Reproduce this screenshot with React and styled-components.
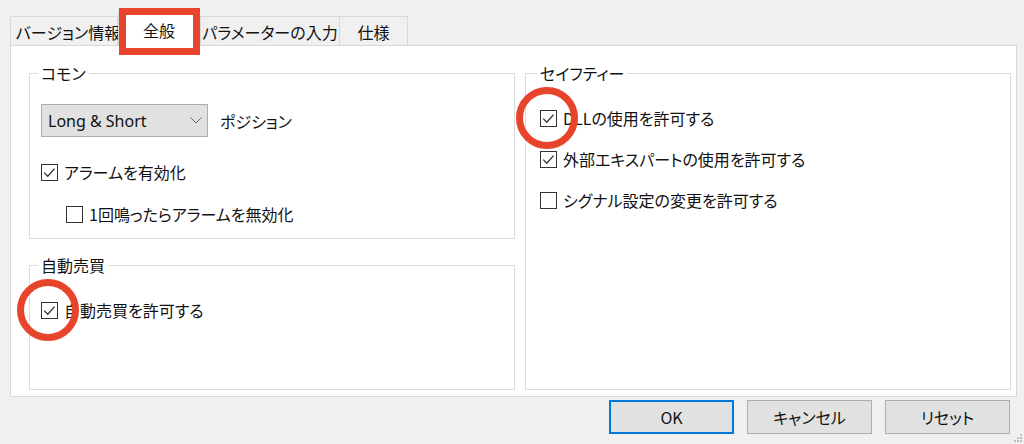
import React from "react";
import styled, { createGlobalStyle } from "styled-components";

const Global = createGlobalStyle`
  html, body { margin: 0; padding: 0; background: #f0f0f0; }
  body {
    font-family: "Noto Sans CJK JP", "Noto Sans", sans-serif;
    font-size: 16px;
    color: #111;
    font-feature-settings: "palt";
  }
  * { box-sizing: border-box; }
`;

const Window = styled.div`
  position: relative;
  width: 1024px;
  height: 444px;
  background: #f0f0f0;
  padding-top: 10px;
  display: flex;
  flex-direction: column;
  overflow: hidden;
`;

const TabBar = styled.div`
  position: relative;
  z-index: 2;
  display: flex;
  align-items: flex-end;
  height: 36px;
  margin: 0 0 -1px 10px;
`;

const Tab = styled.div`
  position: relative;
  width: ${(p) => p.$w}px;
  height: ${(p) => (p.$active ? 36 : 29)}px;
  margin-bottom: ${(p) => (p.$active ? 0 : 1)}px;
  background: ${(p) => (p.$active ? "#fff" : "#f0f0f0")};
  border: 1px solid #d9d9d9;
  border-bottom: none;
  margin-left: ${(p) => (p.$overlap ? -1 : 0)}px;
  display: flex;
  align-items: center;
  justify-content: center;
  padding-top: ${(p) => (p.$active ? 2 : 2)}px;
  padding-left: ${(p) => p.$pl || 0}px;
  font-size: 16px;
  line-height: 22px;
  white-space: nowrap;
`;

const RedBox = styled.div`
  position: absolute;
  left: 0;
  right: -1px;
  top: -3px;
  height: 47px;
  border: 7px solid #e8442b;
  pointer-events: none;
`;

const Panel = styled.div`
  position: relative;
  z-index: 1;
  margin: 0 7px 0 10px;
  height: 352px;
  background: #fff;
  border: 1px solid #d9d9d9;
  padding: 16px 5px 6px 18px;
  display: grid;
  grid-template-columns: 486px 486px;
  column-gap: 10px;
`;

const Column = styled.div`
  display: flex;
  flex-direction: column;
  gap: 15px;
`;

const Group = styled.fieldset`
  margin: 0;
  min-width: 0;
  border: 1px solid #dcdcdc;
  padding: 0 10px 0 ${(p) => p.$inset}px;
  height: ${(p) => (p.$h ? `${p.$h}px` : "auto")};
  flex: ${(p) => (p.$grow ? 1 : "none")};
  display: flex;
  flex-direction: column;
  align-items: flex-start;
`;

const Legend = styled.legend`
  padding: 0 3px;
  margin-left: -3px;
  line-height: 22px;
  font-size: 16px;
`;

const Row = styled.div`
  display: flex;
  align-items: center;
  margin-top: ${(p) => p.$mt || 0}px;
  margin-left: ${(p) => p.$ml || 0}px;
`;

const Select = styled.div`
  width: 167px;
  height: 33px;
  background: #e1e1e1;
  border: 1px solid #adadad;
  display: flex;
  align-items: center;
  justify-content: space-between;
  padding: 0 5px 0 6px;
  font-family: "Noto Sans", "Noto Sans CJK JP", sans-serif;
  font-size: 16px;
`;

const SelectLabel = styled.span`
  margin-left: 12px;
  line-height: 22px;
`;

const CheckRow = styled.label`
  position: relative;
  display: flex;
  align-items: center;
  gap: 6px;
  height: 22px;
  line-height: 22px;
  margin-top: ${(p) => p.$mt || 0}px;
  margin-left: ${(p) => p.$ml || 0}px;
  white-space: nowrap;
`;

const BoxSvg = styled.svg`
  flex: none;
  display: block;
`;

const Ring = styled.span`
  position: absolute;
  left: -24px;
  top: -20px;
  width: 62px;
  height: 62px;
  border: 7px solid #e8442b;
  border-radius: 50%;
  pointer-events: none;
`;

const ButtonRow = styled.div`
  display: flex;
  justify-content: flex-end;
  gap: 13px;
  margin-top: 3px;
  padding-right: 14px;
`;

const Button = styled.div`
  width: 125px;
  height: 34px;
  background: #e1e1e1;
  border: ${(p) => (p.$primary ? "2px solid #0078d7" : "1px solid #adadad")};
  display: flex;
  align-items: center;
  justify-content: center;
  font-size: 16px;
`;

const Grip = styled.svg`
  position: absolute;
  right: 1px;
  bottom: 1px;
`;

function CheckBox({ checked }) {
  return (
    <BoxSvg width="17" height="17" viewBox="0 0 17 17">
      <rect x="0.5" y="0.5" width="16" height="16" fill="#fff" stroke="#333" />
      {checked && (
        <polyline
          points="3.2,8.6 6.8,12.2 13.6,4.6"
          fill="none"
          stroke="#333"
          strokeWidth="1.3"
        />
      )}
    </BoxSvg>
  );
}

function Check({ checked, children, ring, mt, ml }) {
  return (
    <CheckRow $mt={mt} $ml={ml}>
      <CheckBox checked={checked} />
      <span>{children}</span>
      {ring && <Ring />}
    </CheckRow>
  );
}

const tabs = [
  { label: "バージョン情報", w: 108, pl: 8 },
  { label: "全般", w: 82, active: true },
  { label: "パラメーターの入力", w: 140 },
  { label: "仕様", w: 69, overlap: true },
];

export default function App() {
  return (
    <>
      <Global />
      <Window>
        <TabBar>
          {tabs.map((t) => (
            <Tab key={t.label} $w={t.w} $pl={t.pl} $active={t.active} $overlap={t.overlap}>
              {t.label}
              {t.active && <RedBox />}
            </Tab>
          ))}
        </TabBar>
        <Panel>
          <Column>
            <Group $inset={11} $h={177}>
              <Legend>コモン</Legend>
              <Row $mt={20}>
                <Select>
                  <span>Long &amp; Short</span>
                  <svg width="12" height="7" viewBox="0 0 12 7">
                    <polyline points="0.5,0.5 6,6 11.5,0.5" fill="none" stroke="#666" strokeWidth="1" />
                  </svg>
                </Select>
                <SelectLabel>ポジション</SelectLabel>
              </Row>
              <Check checked mt={24}>アラームを有効化</Check>
              <Check mt={20} ml={25}>1回鳴ったらアラームを無効化</Check>
            </Group>
            <Group $inset={11} $grow>
              <Legend>自動売買</Legend>
              <Check checked ring mt={23}>自動売買を許可する</Check>
            </Group>
          </Column>
          <Column>
            <Group $inset={14} $grow>
              <Legend>セイフティー</Legend>
              <Check checked ring mt={23}>DLLの使用を許可する</Check>
              <Check checked mt={19}>外部エキスパートの使用を許可する</Check>
              <Check mt={19}>シグナル設定の変更を許可する</Check>
            </Group>
          </Column>
        </Panel>
        <ButtonRow>
          <Button $primary>OK</Button>
          <Button>キャンセル</Button>
          <Button>リセット</Button>
        </ButtonRow>
        <Grip width="10" height="10" viewBox="0 0 10 10">
          <g fill="#bdbdbd">
            <rect x="7" y="1" width="2" height="2" />
            <rect x="4" y="4" width="2" height="2" />
            <rect x="7" y="4" width="2" height="2" />
            <rect x="1" y="7" width="2" height="2" />
            <rect x="4" y="7" width="2" height="2" />
            <rect x="7" y="7" width="2" height="2" />
          </g>
        </Grip>
      </Window>
    </>
  );
}
